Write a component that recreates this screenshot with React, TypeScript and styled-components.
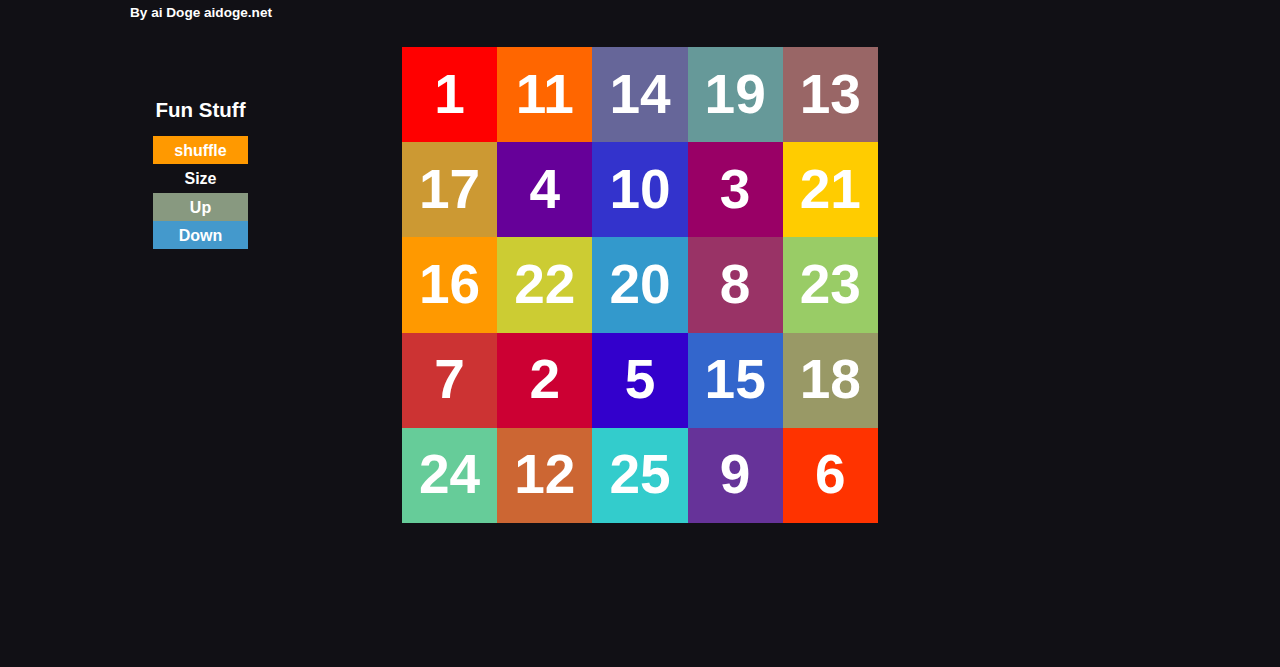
import React from "react";
import styled, { createGlobalStyle } from "styled-components";

const Global = createGlobalStyle`
  html, body { margin: 0; padding: 0; background: #111015; }
  body { font-family: "Liberation Sans", Arial, sans-serif; color: #fff; min-height: 667px; }
`;

const Page = styled.div`
  width: 1280px;
  height: 667px;
  background: #111015;
`;

const Byline = styled.div`
  padding: 5px 0 0 130px;
  height: 16px;
  font-size: 13.6px;
  font-weight: bold;
  line-height: 16px;
`;

const Main = styled.div`
  display: flex;
  align-items: flex-start;
  margin-top: 26px;
`;

const Sidebar = styled.div`
  margin-left: 153px;
  width: 95px;
  padding-top: 51px;
  display: flex;
  flex-direction: column;
  align-items: stretch;
  text-align: center;
`;

const Title = styled.div`
  font-size: 20.5px;
  font-weight: bold;
  line-height: 24px;
  margin-bottom: 14px;
`;

const Button = styled.div<{ $bg: string }>`
  background: ${(p) => p.$bg};
  height: 28px;
  line-height: 29px;
  font-size: 16px;
  font-weight: bold;
  color: #fff;
`;

const Label = styled.div`
  height: 29px;
  line-height: 30px;
  font-size: 16px;
  font-weight: bold;
`;

const Grid = styled.div`
  margin-left: 154px;
  display: grid;
  grid-template-columns: repeat(5, 95.2px);
  grid-auto-rows: 95.2px;
`;

const Cell = styled.div<{ $bg: string }>`
  background: ${(p) => p.$bg};
  display: flex;
  align-items: center;
  justify-content: center;
  padding-bottom: 2px;
  box-sizing: border-box;
  font-size: 55px;
  font-weight: bold;
  color: #fff;
`;

const cells: [number, string][] = [
  [1, "#ff0000"], [11, "#ff6600"], [14, "#666699"], [19, "#669999"], [13, "#996666"],
  [17, "#cc9933"], [4, "#660099"], [10, "#3333cc"], [3, "#990066"], [21, "#ffcc00"],
  [16, "#ff9900"], [22, "#cccc33"], [20, "#3399cc"], [8, "#993366"], [23, "#99cc66"],
  [7, "#cc3333"], [2, "#cc0033"], [5, "#3300cc"], [15, "#3366cc"], [18, "#999966"],
  [24, "#66cc99"], [12, "#cc6633"], [25, "#33cccc"], [9, "#663399"], [6, "#ff3300"],
];

export default function App() {
  return (
    <Page>
      <Global />
      <Byline>By ai Doge aidoge.net</Byline>
      <Main>
        <Sidebar>
          <Title>Fun Stuff</Title>
          <Button $bg="#ff9900">shuffle</Button>
          <Label>Size</Label>
          <Button $bg="#889980">Up</Button>
          <Button $bg="#4499cc">Down</Button>
        </Sidebar>
        <Grid>
          {cells.map(([n, c]) => (
            <Cell key={n} $bg={c}>{n}</Cell>
          ))}
        </Grid>
      </Main>
    </Page>
  );
}
